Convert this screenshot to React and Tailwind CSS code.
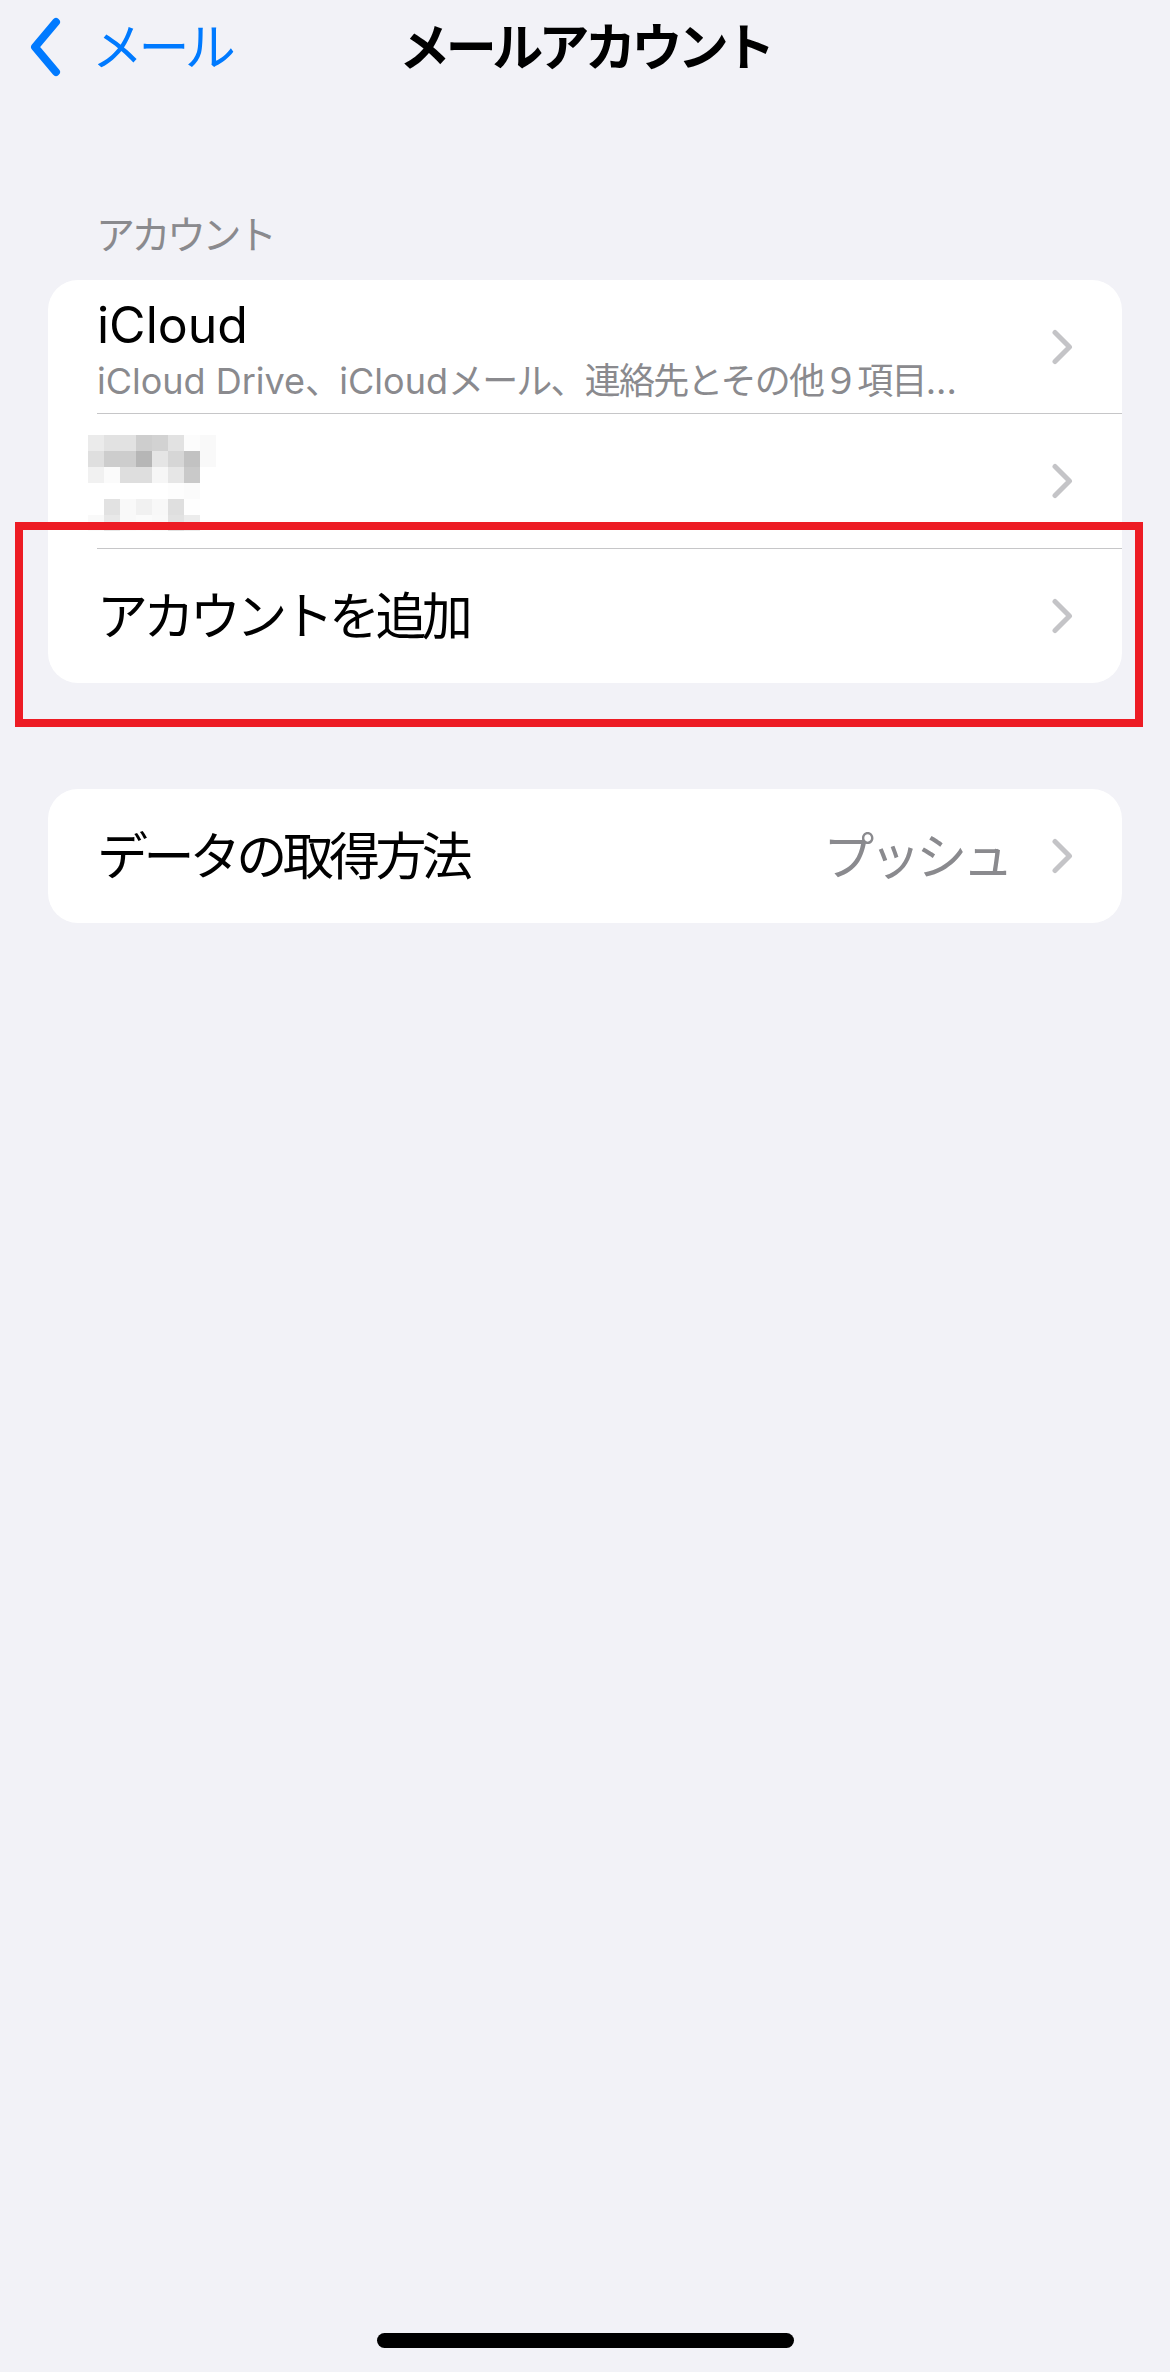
const mosaic = [
  ["bg-[#ebebeb]", "bg-[#e2e2e2]", "bg-[#e2e2e2]", "bg-[#cecece]", "bg-[#d2d2d2]", "bg-[#e2e2e2]", "bg-[#fcfcfc]", "bg-[#f9f9f9]"],
  ["bg-[#dfdfdf]", "bg-[#cdcdcd]", "bg-[#cdcdcd]", "bg-[#b6b6b6]", "bg-[#e5e5e5]", "bg-[#d6d6d6]", "bg-[#c2c2c2]", "bg-[#f9f9f9]"],
  ["bg-[#f1f1f1]", "bg-[#fbfbfb]", "bg-[#dedede]", "bg-[#dedede]", "bg-[#f6f6f6]", "bg-[#e6e6e6]", "bg-[#c9c9c9]", "bg-white"],
  ["bg-white", "bg-white", "bg-white", "bg-white", "bg-white", "bg-[#fdfdfd]", "bg-[#fbfbfb]", "bg-white"],
  ["bg-white", "bg-[#e2e2e2]", "bg-[#f9f9f9]", "bg-[#f1f1f1]", "bg-[#f8f8f8]", "bg-[#dfdfdf]", "bg-[#fefefe]", "bg-white"],
  ["bg-[#f9f9f9]", "bg-[#e8e8e8]", "bg-[#f9f9f9]", "bg-[#fbfbfb]", "bg-[#f9f9f9]", "bg-[#e2e2e2]", "bg-[#ececec]", "bg-white"],
]

const font = "font-['Inter','Noto_Sans_CJK_JP',sans-serif]"

function Chevron() {
  return (
    <svg width="22" height="36" viewBox="0 0 22 36" className="shrink-0">
      <path
        d="M4 3.5 L18.5 18 L4 32.5"
        fill="none"
        stroke="#c4c4c7"
        strokeWidth="5"
        strokeLinecap="round"
        strokeLinejoin="round"
      />
    </svg>
  )
}

function BackChevron() {
  return (
    <svg width="34" height="60" viewBox="0 0 34 60" className="shrink-0">
      <path
        d="M29 5 L8 30 L29 55"
        fill="none"
        stroke="#007aff"
        strokeWidth="8"
        strokeLinecap="round"
        strokeLinejoin="round"
      />
    </svg>
  )
}

function Row({ children, height, last }) {
  return (
    <div className="pl-[49px]">
      <div
        className={`flex items-center pr-[49px] ${height} ${
          last ? "" : "border-b border-[#c6c6c8]"
        }`}
      >
        {children}
      </div>
    </div>
  )
}

export default function App() {
  return (
    <div className={`relative flex min-h-[2372px] flex-col bg-[#f2f2f7] ${font}`}>
      {/* nav bar */}
      <div className="grid h-[94px] grid-cols-[1fr_auto_1fr] items-center">
        <div className="flex items-center pl-[27px]">
          <BackChevron />
          <span className="ml-[31px] text-[51px] leading-none tracking-[-0.09em] text-[#007aff]">
            メール
          </span>
        </div>
        <h1 className="text-[51px] font-semibold leading-none tracking-[-0.09em] text-black">
          メールアカウント
        </h1>
        <div />
      </div>

      {/* section header */}
      <div className="mt-[118px] h-[46px] pl-[96px] text-[39px] leading-[46px] tracking-[-0.09em] text-[#8a8a8e]">
        アカウント
      </div>

      <div className="mx-[48px] mt-[22px] overflow-hidden rounded-[30px] bg-white">
        <Row height="h-[134px]">
          <div className="flex min-w-0 flex-1 flex-col pt-[5px]">
            <span className="text-[50px] leading-[58px] text-black">iCloud</span>
            <span className="mt-[5px] whitespace-nowrap text-[36px] leading-[44px] text-[#8a8a8e]">
              iCloud Drive
              <span className="tracking-[-0.05em]">、</span>
              iCloud
              <span className="tracking-[-0.05em]">メール、連絡先とその他９項目</span>
              ...
            </span>
          </div>
          <Chevron />
        </Row>
        <div className="pl-[49px]">
          <div className="flex h-[135px] border-b border-[#c6c6c8] pr-[49px]">
            <div className="-ml-[9px] mt-[21px] grid grid-cols-[repeat(8,16px)] grid-rows-[repeat(6,16px)]">
              {mosaic.flat().map((c, i) => (
                <div key={i} className={c} />
              ))}
            </div>
            <div className="ml-auto self-center">
              <Chevron />
            </div>
          </div>
        </div>
        <Row height="h-[134px]" last>
          <span className="flex-1 text-[51px] leading-none tracking-[-0.09em] text-black">
            アカウントを追加
          </span>
          <Chevron />
        </Row>
      </div>

      <div className="mx-[48px] mt-[106px] overflow-hidden rounded-[30px] bg-white">
        <Row height="h-[134px]" last>
          <span className="flex-1 text-[51px] leading-none tracking-[-0.09em] text-black">
            データの取得方法
          </span>
          <span className="mr-[42px] text-[51px] leading-none tracking-[-0.09em] text-[#8a8a8e]">
            プッシュ
          </span>
          <Chevron />
        </Row>
      </div>

      {/* annotation box */}
      <div className="absolute left-[15px] top-[522px] h-[205px] w-[1128px] border-[8px] border-[#ed1c24]" />

      <div className="mt-auto mb-[24px] flex justify-center">
        <div className="h-[15px] w-[417px] rounded-full bg-black" />
      </div>
    </div>
  )
}
